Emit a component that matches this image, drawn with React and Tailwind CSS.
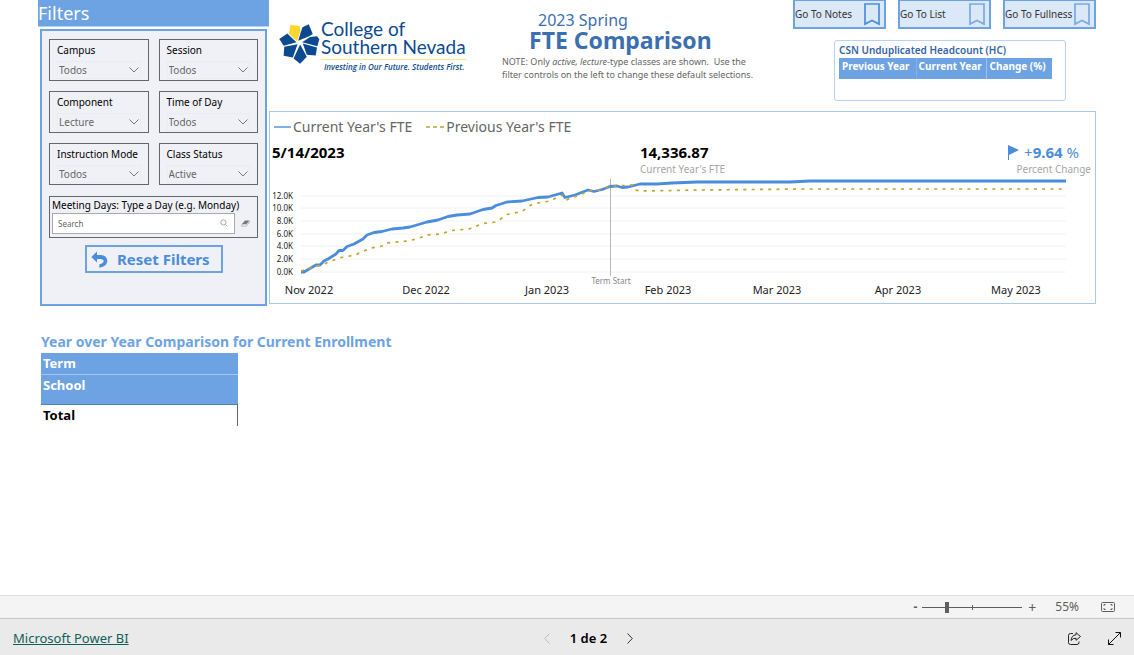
import { useState } from "react";

const FILTERS = [
  { id: "campus", label: "Campus", value: "Todos" },
  { id: "session", label: "Session", value: "Todos" },
  { id: "component", label: "Component", value: "Lecture" },
  { id: "time", label: "Time of Day", value: "Todos" },
  { id: "mode", label: "Instruction Mode", value: "Todos" },
  { id: "status", label: "Class Status", value: "Active" },
];

const Y_TICKS = [
  { label: "12.0K", y: 19 },
  { label: "10.0K", y: 31 },
  { label: "8.0K", y: 44 },
  { label: "6.0K", y: 57 },
  { label: "4.0K", y: 69 },
  { label: "2.0K", y: 82 },
  { label: "0.0K", y: 95 },
];

const X_TICKS = [
  { label: "Nov 2022", x: 39 },
  { label: "Dec 2022", x: 156 },
  { label: "Jan 2023", x: 277 },
  { label: "Feb 2023", x: 398 },
  { label: "Mar 2023", x: 507 },
  { label: "Apr 2023", x: 628 },
  { label: "May 2023", x: 746 },
];

const CURRENT =
  "31,95 34,95 46,88 50,88 54,84 58,82 66,77 69,73.5 73,73.5 77,69.5 84,67 93,62 97,58 104,55.5 112,54.5 122,52 133,51 140,50 157,45 168,43 178,39.5 187,38 200,37 213,32.5 222,31 226,28.5 237,25 252,24 268,20.5 278,20 292,16 295,20.5 305,18 318,13 324,14.5 332,12.5 340,9.5 347,9 352,10.5 358,10 370,7 387,7 402,6 427,5 520,5 540,4 796,4";

const PREVIOUS =
  "31,94 54,87 69,81 85,78 101,71 112,69 116,66 138,64 148,61.5 157,58 170,57 182,53.5 199,52 213,46.5 225,45 230,42.5 237,37.5 252,34.5 261,28 268,26 280,24 292,18 296,23 308,18.5 320,13.5 325,14.5 340,9.5 362,8 365,13 371,14 430,13 536,12 796,12";

function Logo() {
  return (
    <div className="flex items-start text-[#0b4a90]">
      <svg viewBox="26 46 124 121" className="mt-1 h-10 w-[41px]" fill="#0b4a90" aria-hidden="true">
        <path fill="#ffd52e" d="M61 48 L88 52 L91 67 L80 98 L56 75 Z" />
        <path d="M97 56 L116 47 L128 76 L119 82 L84 97 L92 70 Z" />
        <path d="M120 85 L141 83 L148 92 L142 113 L96 101 Z" />
        <path d="M98 105 L141 117 L137 141 L110 139 Z" />
        <path d="M90 108 L110 145 L90 166 L70 150 Z" />
        <path d="M82 107 L68 147 L40 142 L42 115 Z" />
        <path d="M51 75 L79 101 L40 112 L27 91 Z" />
      </svg>
      <div className="ml-px font-[Lato]">
        <div className="text-[19px] leading-[18px]">
          College of
          <br />
          Southern Nevada
        </div>
        <div className="mt-[3px] border-t border-[#ffe680] pt-px pl-[3px] font-['Open_Sans'] text-[8px] leading-3 font-semibold italic whitespace-nowrap">
          Investing in Our Future. Students First.
        </div>
      </div>
    </div>
  );
}

function FilterSelect({ id, label, value }) {
  return (
    <div className="h-[42px] border border-[#66666a] px-[7px] pt-[3px]">
      <label htmlFor={id} className="block text-[10px] leading-[14px] text-black">
        {label}
      </label>
      <div className="relative mt-1">
        <select
          id={id}
          defaultValue={value}
          className="block h-[18px] w-full appearance-none border border-[#ebecef] bg-transparent pl-px text-[10px] leading-4 text-[#666]"
        >
          <option>{value}</option>
        </select>
        <svg viewBox="0 0 10 6" className="pointer-events-none absolute top-[6px] right-[2px] h-[6px] w-[10px]" fill="none" stroke="#777">
          <path d="M0.5 0.5 L5 5 L9.5 0.5" />
        </svg>
      </div>
    </div>
  );
}

function FilterPanel() {
  const [search, setSearch] = useState("");

  return (
    <aside className="w-[231px] shrink-0">
      <h2 className="h-[27px] border-b border-[#b9d2f2] bg-[#6ea3e3] text-[18px] leading-[26px] text-white">Filters</h2>
      <div className="mx-[2px] mt-[2px] h-[277px] border-2 border-[#6ea3e3] bg-[#f0f1f6] px-[7px] pt-2">
        <div className="grid grid-cols-2 gap-[10px]">
          {FILTERS.map((f) => (
            <FilterSelect key={f.id} {...f} />
          ))}
        </div>

        {/* Meeting days search */}
        <div className="mt-[11px] h-[42px] border border-[#66666a] px-[2px] pt-px">
          <label htmlFor="days" className="block text-[10px] leading-[14px] whitespace-nowrap text-black">
            Meeting Days: Type a Day (e.g. Monday)
          </label>
          <div className="mt-px flex items-center">
            <div className="relative w-[183px]">
              <input
                id="days"
                placeholder="Search"
                value={search}
                onChange={(e) => setSearch(e.target.value)}
                className="block h-[21px] w-full border border-[#aaa] bg-white px-[5px] text-[8px] text-[#555] placeholder:text-[#666]"
              />
              <svg viewBox="0 0 8 8" className="pointer-events-none absolute top-[6px] right-[7px] size-2" fill="none" stroke="#888" strokeWidth="0.7">
                <circle cx="3.4" cy="3.4" r="2.6" />
                <path d="M5.3 5.3 L7.6 7.6" />
              </svg>
            </div>
            <button aria-label="Clear" onClick={() => setSearch("")} className="ml-[6px]">
              <svg viewBox="0 0 9 7" className="h-[7px] w-[9px]">
                <path d="M4 0.5 H8.5 L5.5 4 H1 Z" fill="#777" />
                <path d="M1 4.2 H5.5 L8.3 1.2 V2.6 L5.2 6.2 H0.6 Z" fill="#f0f1f6" stroke="#888" strokeWidth="0.5" />
              </svg>
            </button>
          </div>
        </div>

        <button className="mt-[7px] ml-9 flex h-7 w-[138px] items-center border-2 border-[#6ea3e3] pl-1 text-[15px] font-bold text-[#4a8ddc]">
          <svg viewBox="0 0 17 17" className="mr-[9px] size-[17px]" aria-hidden="true">
            <path d="M6 0.5 L0.3 6 L6 11.5 V8 H9.5 C14 8 13.8 12.5 8.3 13.5 V16.7 C19 15.8 18.5 4 9.5 4 H6 Z" fill="#4a8ddc" />
          </svg>
          Reset Filters
        </button>
      </div>
    </aside>
  );
}

function BookmarkButton({ label, active }) {
  return (
    <button className="flex h-[29px] w-[93px] items-center justify-between border-2 border-t-1 border-[#6ea3e3] bg-[#dbe8f7] pr-1 text-[10px] whitespace-nowrap text-[#333]">
      {label}
      <svg viewBox="0 0 16 23" className="h-[23px] w-4 shrink-0" fill="none" stroke={active ? "#4a8ddc" : "#78aae8"} strokeWidth="1.7">
        <path d="M1 1 H15 V21 L8 17.5 L1 21 Z" />
      </svg>
    </button>
  );
}

function Headcount() {
  return (
    <section className="mt-[11px] mr-[30px] ml-[41px] h-[61px] rounded-[3px] border border-[#b9d2f2] px-1 pt-[2px]">
      <h3 className="text-[10px] leading-[14px] font-semibold text-[#3565a5]">CSN Unduplicated Headcount (HC)</h3>
      <table className="mt-px h-[21px] w-[213px] bg-[#6ea3e3] text-left text-[10px] leading-3 whitespace-nowrap text-white">
        <thead>
          <tr className="align-top">
            <th className="w-[77px] border-r border-[#84b1e8] px-[3px] pt-[2px]">Previous Year</th>
            <th className="w-[70px] border-r border-[#9dc1ee] px-[2px] pt-[2px]">Current Year</th>
            <th className="px-[3px] pt-[2px]">Change (%)</th>
          </tr>
        </thead>
      </table>
    </section>
  );
}

function FteChart() {
  return (
    <section className="h-[193px] border border-[#a9c8f0]">
      <div className="flex gap-[14px] pt-1 pl-1 text-[14px] leading-[22px] text-[#666]">
        <span className="flex items-center gap-[2px]">
          <svg viewBox="0 0 17 2" className="h-[2px] w-[17px]">
            <path d="M0 1 H17" stroke="#4a8ddc" strokeWidth="1.4" />
          </svg>
          Current Year's FTE
        </span>
        <span className="flex items-center gap-[2px]">
          <svg viewBox="0 0 18 2" className="h-[2px] w-[18px]">
            <path d="M0 1 H18" stroke="#c0a52b" strokeWidth="1.4" strokeDasharray="4 3" />
          </svg>
          Previous Year's FTE
        </span>
      </div>

      {/* KPI row */}
      <div className="mt-1 grid h-[35px] grid-cols-3 text-[15px] leading-5 font-bold">
        <div className="pl-[2px] text-black">5/14/2023</div>
        <div className="justify-self-center text-black">
          14,336.87
          <div className="text-[10px] leading-[14px] font-normal text-[#a6a6a6]">Current Year's FTE</div>
        </div>
        <div className="justify-self-end pr-1 text-[#4a8ddc]">
          <div className="mr-3 flex items-center justify-end gap-[5px]">
            <svg viewBox="0 0 11 15" className="h-[15px] w-[11px]" fill="#4a8ddc">
              <path d="M0 0 L11 5 L1 10 V15 H0 Z" />
            </svg>
            <span>
              <span className="font-normal">+</span>9.64 <span className="font-normal">%</span>
            </span>
          </div>
          <div className="text-right text-[10px] leading-[14px] font-normal text-[#a6a6a6]">Percent Change</div>
        </div>
      </div>

      <svg viewBox="0 0 825 125" className="block w-full" fill="none">
        {Y_TICKS.map((t) => (
          <g key={t.label}>
            <path d={`M31 ${t.y} H796`} stroke="#f2f2f2" />
            <text x="23" y={t.y + 3} textAnchor="end" fontSize="8" fill="#222">
              {t.label}
            </text>
          </g>
        ))}
        <path d="M340.5 2 V99" stroke="#b8b8b8" />
        <polyline points={CURRENT} stroke="#4a8ddc" strokeWidth="2.8" strokeLinejoin="round" />
        <polyline points={PREVIOUS} stroke="#c0a52b" strokeWidth="1.7" strokeDasharray="3 5.3" />
        <text x="341" y="107" textAnchor="middle" fontSize="8" fill="#888">
          Term Start
        </text>
        {X_TICKS.map((t) => (
          <text key={t.label} x={t.x} y="117" textAnchor="middle" fontSize="11" fill="#222">
            {t.label}
          </text>
        ))}
      </svg>
    </section>
  );
}

function EnrollmentTable() {
  return (
    <section className="mt-[25px] ml-[3px]">
      <h2 className="text-[14px] leading-[22px] font-bold text-[#6ea3e3]">Year over Year Comparison for Current Enrollment</h2>
      <table className="w-[197px] text-left text-[13px] leading-5">
        <thead className="bg-[#6ea3e3] text-white">
          <tr className="h-[21px] border-b border-[#a5c7f0]">
            <th className="px-[2px]">Term</th>
          </tr>
          <tr className="h-[30px] border-b border-[#4a80c4] align-top">
            <th className="px-[2px]">School</th>
          </tr>
        </thead>
        <tbody>
          <tr className="h-[22px]">
            <th className="border-r border-[#66666a] px-[2px] text-black">Total</th>
          </tr>
        </tbody>
      </table>
    </section>
  );
}

function ZoomBar() {
  const [zoom, setZoom] = useState(24);

  return (
    <div className="flex h-[23px] items-center justify-end border-t border-[#dedede] bg-[#f4f4f4] pr-[19px] text-[12px] text-[#605e5c]">
      <button aria-label="Zoom out" className="mr-[5px] font-bold">-</button>
      <div className="relative flex h-4 w-[100px] items-center">
        <span className="absolute top-[6px] left-[50px] h-[5px] w-px bg-[#605e5c]" />
        <input
          type="range"
          aria-label="Zoom"
          value={zoom}
          onChange={(e) => setZoom(Number(e.target.value))}
          className="relative h-px w-full appearance-none bg-[#605e5c] [&::-webkit-slider-thumb]:h-[11px] [&::-webkit-slider-thumb]:w-1 [&::-webkit-slider-thumb]:appearance-none [&::-webkit-slider-thumb]:bg-[#605e5c]"
        />
      </div>
      <button aria-label="Zoom in" className="ml-[6px] text-[14px]">+</button>
      <span className="ml-[19px]">55%</span>
      <button aria-label="Fit to page" className="ml-[22px]">
        <svg viewBox="0 0 14 10" className="h-[10px] w-[14px]" fill="none" stroke="#605e5c">
          <rect x="0.5" y="0.5" width="13" height="9" rx="1" />
          <path d="M3 4 V2.5 H4.5 M9.5 2.5 H11 V4 M11 6 V7.5 H9.5 M4.5 7.5 H3 V6" />
        </svg>
      </button>
    </div>
  );
}

function StatusBar() {
  return (
    <footer className="grid h-[37px] grid-cols-[1fr_auto_1fr] items-center border-t border-[#c6c6c6] bg-[#eaeaea] px-[13px] pt-[3px]">
      <a href="#" className="justify-self-start text-[13px] text-[#0f6158] underline">Microsoft Power BI</a>
      <div className="flex items-center gap-5 pl-[43px] text-[13px] text-black">
        <button aria-label="Previous page" disabled>
          <svg viewBox="0 0 6 11" className="h-[11px] w-[6px]" fill="none" stroke="#bbb">
            <path d="M5.5 0.5 L0.7 5.5 L5.5 10.5" />
          </svg>
        </button>
        <span className="font-semibold">1 de 2</span>
        <button aria-label="Next page">
          <svg viewBox="0 0 6 11" className="h-[11px] w-[6px]" fill="none" stroke="#333">
            <path d="M0.5 0.5 L5.3 5.5 L0.5 10.5" />
          </svg>
        </button>
      </div>
      <div className="flex gap-[27px] justify-self-end">
        <button aria-label="Share">
          <svg viewBox="0 0 13 13" className="size-[13px]" fill="none" stroke="#222" strokeLinejoin="round">
            <path d="M5 1.5 H2.5 Q0.5 1.5 0.5 3.5 V10.5 Q0.5 12.5 2.5 12.5 H9 Q11 12.5 11 10.5 V9.5" />
            <path d="M8 0.7 L12.5 4.5 L8 8.3 V6.2 Q5 6 3 8.5 Q3.5 3.2 8 2.8 Z" />
          </svg>
        </button>
        <button aria-label="Full screen">
          <svg viewBox="0 0 13 13" className="size-[13px]" fill="none" stroke="#111">
            <path d="M7.5 0.5 H12.5 V5.5 M12.5 0.5 L0.5 12.5 M0.5 7.5 V12.5 H5.5" />
          </svg>
        </button>
      </div>
    </footer>
  );
}

export default function App() {
  return (
    <div className="flex min-h-screen flex-col bg-white font-['Noto_Sans','Open_Sans',sans-serif]">
      <main className="flex-1 px-[38px]">
        <div className="flex">
          <FilterPanel />
          <div className="min-w-0 flex-1">
            <header className="flex h-[111px] items-start">
              <div className="w-[233px] shrink-0 pt-5 pl-[10px]">
                <Logo />
              </div>
              <div className="pt-[11px]">
                <h1 className="ml-[27px] font-bold text-[#3b6fb0]">
                  <span className="block pl-[9px] text-[16px] leading-[18px] font-normal">2023 Spring</span>
                  <span className="block text-[23px] leading-[22px]">FTE Comparison</span>
                </h1>
                <p className="mt-1 text-[9px] leading-[13px] whitespace-nowrap text-[#666]">
                  NOTE: Only <em>active, lecture</em>-type classes are shown.&nbsp; Use the
                  <br />
                  filter controls on the left to change these default selections.
                </p>
              </div>
              <div className="ml-auto w-[303px] shrink-0">
                <nav className="flex justify-between">
                  <BookmarkButton label="Go To Notes" active />
                  <BookmarkButton label="Go To List" />
                  <BookmarkButton label="Go To Fullness" />
                </nav>
                <Headcount />
              </div>
            </header>
            <FteChart />
          </div>
        </div>
        <EnrollmentTable />
      </main>
      <ZoomBar />
      <StatusBar />
    </div>
  );
}
